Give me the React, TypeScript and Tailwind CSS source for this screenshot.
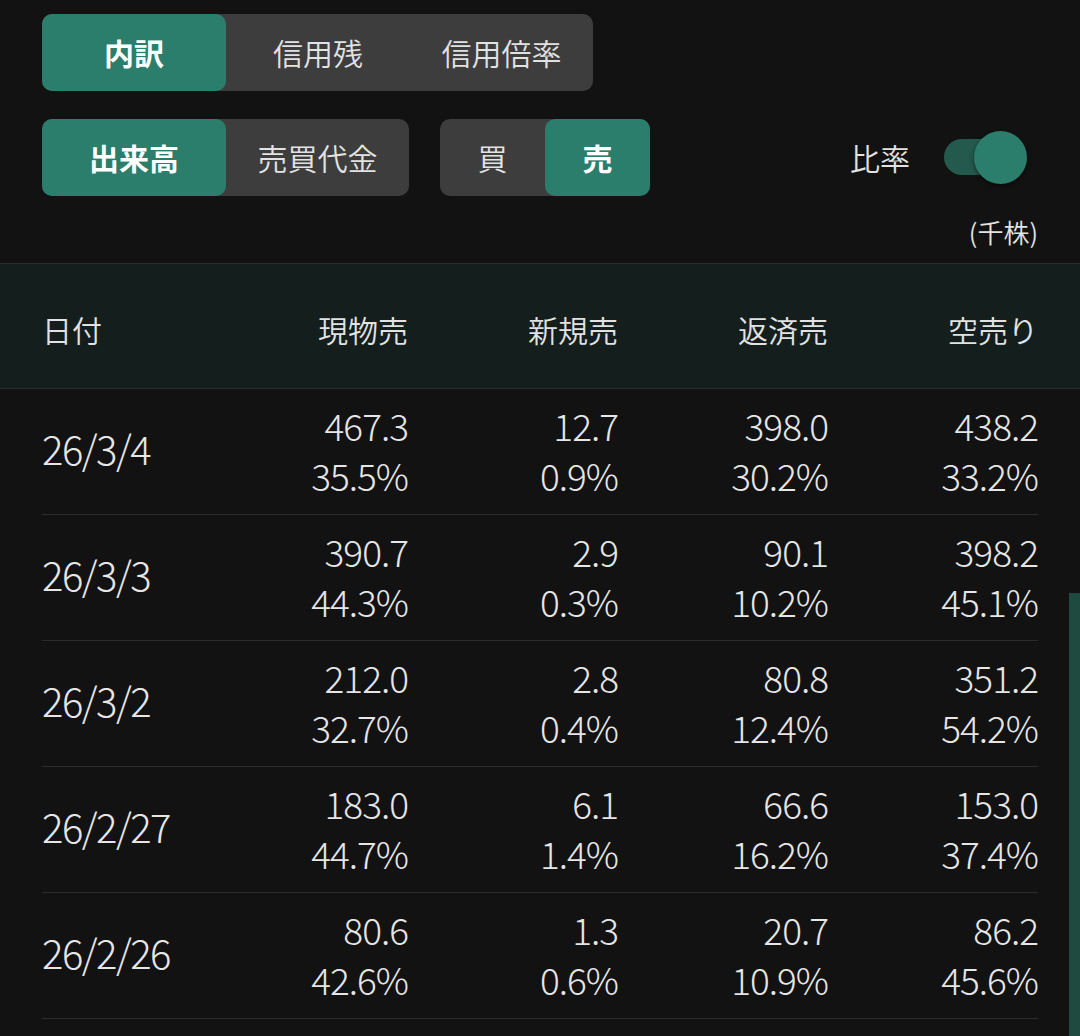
import React from "react";

const rows = [
  { d: "26/3/4", v: [["467.3", "35.5%"], ["12.7", "0.9%"], ["398.0", "30.2%"], ["438.2", "33.2%"]] },
  { d: "26/3/3", v: [["390.7", "44.3%"], ["2.9", "0.3%"], ["90.1", "10.2%"], ["398.2", "45.1%"]] },
  { d: "26/3/2", v: [["212.0", "32.7%"], ["2.8", "0.4%"], ["80.8", "12.4%"], ["351.2", "54.2%"]] },
  { d: "26/2/27", v: [["183.0", "44.7%"], ["6.1", "1.4%"], ["66.6", "16.2%"], ["153.0", "37.4%"]] },
  { d: "26/2/26", v: [["80.6", "42.6%"], ["1.3", "0.6%"], ["20.7", "10.9%"], ["86.2", "45.6%"]] },
];

const font = { fontFamily: '"Noto Sans CJK JP", "Noto Sans", sans-serif' };

function Tab({ label, active, w }: { label: string; active?: boolean; w: string }) {
  return (
    <div
      className={`${w} h-full flex items-center justify-center rounded-[10px] text-[30px] ${
        active ? "bg-[#2a7e6b] text-white font-bold" : "text-[#e2e2e2] font-[350]"
      }`}
    >
      {label}
    </div>
  );
}

export default function App() {
  return (
    <div className="relative w-[1080px] h-[1036px] overflow-hidden bg-[#121212]" style={font}>
      <div className="px-[42px] pt-[14px]">
        <div className="flex h-[77px] w-[551px] rounded-[10px] bg-[#3d3d3d]">
          <Tab label="内訳" active w="w-[184px]" />
          <Tab label="信用残" w="w-[184px]" />
          <Tab label="信用倍率" w="w-[183px]" />
        </div>
        <div className="mt-[28px] flex h-[77px] items-center">
          <div className="flex h-full w-[367px] rounded-[10px] bg-[#3d3d3d]">
            <Tab label="出来高" active w="w-[184px]" />
            <Tab label="売買代金" w="w-[183px]" />
          </div>
          <div className="ml-[31px] flex h-full w-[210px] rounded-[10px] bg-[#3d3d3d]">
            <Tab label="買" w="w-[105px]" />
            <Tab label="売" active w="w-[105px]" />
          </div>
          <div className="ml-auto mr-[11px] flex items-center">
            <span className="text-[30px] font-[350] text-[#e2e2e2]">比率</span>
            <div className="relative ml-[34px] h-[53px] w-[83px]">
              <div className="absolute left-0 top-[8px] h-[36px] w-[70px] rounded-full bg-[#235a4d]" />
              <div className="absolute right-0 top-0 h-[53px] w-[53px] rounded-full bg-[#2a7e6b] shadow-[0_2px_4px_rgba(0,0,0,0.5)]" />
            </div>
          </div>
        </div>
        <div className="mt-[18px] flex h-[36px] items-center justify-end text-[26px] font-[350] leading-[36px] text-[#e2e2e2]">
          (千株)
        </div>
      </div>

      <div className="mt-[13px] h-[126px] border-y border-[#2c2c2c] bg-[#141e1d] px-[42px]">
        <div className="grid h-full grid-cols-[156px_210px_210px_210px_210px] items-center pt-[6px] text-[30px] font-[350] text-[#e2e2e2]">
          <div>日付</div>
          <div className="text-right">現物売</div>
          <div className="text-right">新規売</div>
          <div className="text-right">返済売</div>
          <div className="text-right">空売り</div>
        </div>
      </div>

      <div className="px-[42px]">
        {rows.map((r) => (
          <div
            key={r.d}
            className="grid h-[126px] grid-cols-[156px_210px_210px_210px_210px] items-center border-b border-[#2c2c2c] font-light text-[#e6e6e6]"
          >
            <div className="pb-[8px] text-[40px] tracking-[-1.5px]">{r.d}</div>
            {r.v.map((c, i) => (
              <div key={i} className="pb-[4px] text-right text-[37px] leading-[50px] tracking-[-1px]">
                <div>{c[0]}</div>
                <div>{c[1]}</div>
              </div>
            ))}
          </div>
        ))}
      </div>

      <div className="absolute right-0 top-[593px] h-[443px] w-[11px] bg-[#1e4a40]" />
    </div>
  );
}
